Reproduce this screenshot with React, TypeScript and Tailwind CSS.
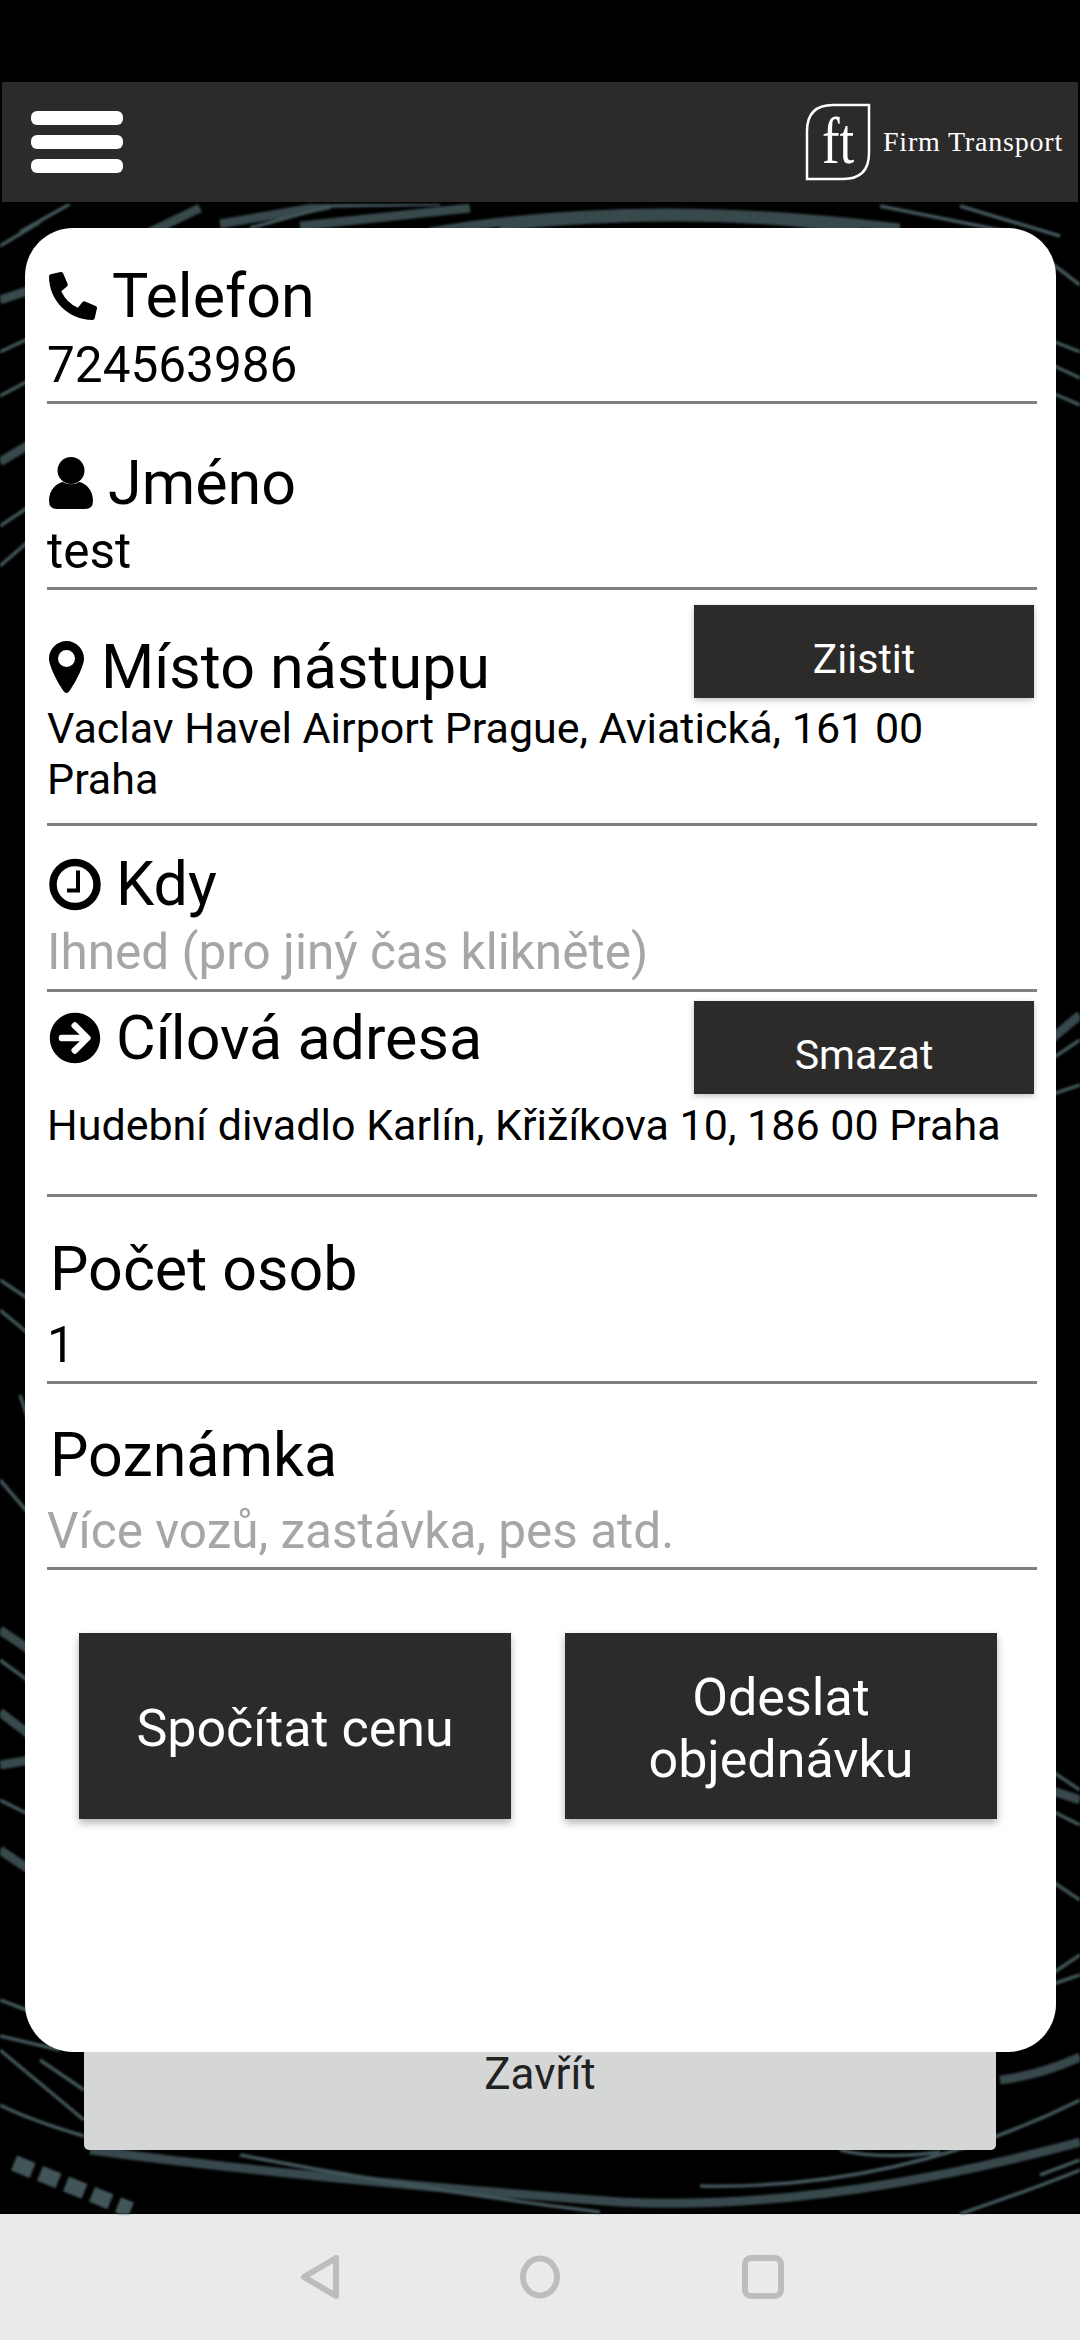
import { FaArrowCircleRight, FaPhoneAlt } from "react-icons/fa"

const wideStreaks = [
  "M150 232 L200 208", "M220 224 L330 205", "M300 226 L470 208", "M430 232 Q640 196 900 228", "M500 226 Q700 206 860 230",
  "M0 300 L30 290", "M0 462 L30 444", "M1050 1040 L1080 1015", "M1050 1790 L1080 1800", "M90 2150 Q300 2178 620 2202 Q820 2212 1080 2142",
  "M1000 2080 Q1040 2075 1080 2057", "M0 1712 L30 1735", "M0 1850 L30 1870", "M0 1630 L30 1650", "M0 1765 L30 1760",
]

const thinStreaks = [
  "M20 232 L70 204", "M0 246 L40 222", "M250 228 L330 206 L440 204", "M880 206 L1010 232", "M960 206 L1060 236",
  "M0 352 L30 338", "M0 396 L30 380", "M0 526 L30 506", "M0 566 L30 540",
  "M0 1280 L30 1300", "M0 1310 L30 1335", "M20 1395 L30 1425", "M0 1480 L30 1515", "M0 1660 L30 1682",
  "M0 1800 L30 1815", "M0 2000 L40 2015", "M0 2036 L60 2050",
  "M1050 262 L1080 285", "M1050 340 L1080 352", "M1050 364 L1080 378", "M1050 392 L1080 405",
  "M1050 1060 L1080 1040", "M1050 1095 L1080 1085", "M1050 1770 L1080 1790",
  "M1050 1810 L1080 1825", "M1050 1880 L1080 1900", "M1050 1975 L1080 1955", "M1050 1985 L1080 1975", "M1040 2175 L1080 2160",
  "M0 2105 Q30 2120 84 2136", "M240 2155 Q420 2190 600 2212", "M700 2186 Q900 2190 1080 2100", "M840 2150 Q880 2160 940 2152",
  "M40 2060 L84 2090", "M0 2050 L84 2120", "M960 2214 Q1030 2190 1080 2170",
]

function Background() {
  return (
    <svg className="absolute inset-0 h-full w-full blur-[1px]" viewBox="0 204 1080 2010" preserveAspectRatio="none">
      <g fill="none" stroke="#42565a">
        <g strokeWidth="9" opacity="0.85">
          {wideStreaks.map((d) => (
            <path key={d} d={d} />
          ))}
        </g>
        <g strokeWidth="3.5">
          {thinStreaks.map((d) => (
            <path key={d} d={d} />
          ))}
        </g>
        <path d="M14 2163 L131 2210" strokeWidth="16" strokeDasharray="20 8" />
      </g>
    </svg>
  )
}

function Logo() {
  return (
    <svg width="66" height="78" viewBox="0 0 66 78" className="shrink-0">
      <path d="M2 76 V28 Q2 2 28 2 H64 V50 Q64 76 38 76 Z" fill="none" stroke="#fff" strokeWidth="2.5" />
      <text transform="translate(33 60) scale(0.8 1)" textAnchor="middle" fill="#fff" fontFamily="'Liberation Serif', serif" fontSize="66">
        ft
      </text>
    </svg>
  )
}

function UserIcon() {
  return (
    <svg width="44" height="52" viewBox="0 0 44 52" className="ml-[2px] shrink-0">
      <circle cx="22" cy="13.5" r="13.5" />
      <path d="M0 44 C0 32 8 26 14 25 C18 28 26 28 30 25 C36 26 44 32 44 44 Q44 52 36 52 H8 Q0 52 0 44 Z" />
    </svg>
  )
}

function MarkerIcon() {
  return (
    <svg width="35" height="53" viewBox="0 0 35 53" className="ml-[2px] shrink-0">
      <path
        fillRule="evenodd"
        d="M17.5 0 C27 0 35 8 35 17.5 C35 26 24 46 19.5 51 Q17.5 53 15.5 51 C11 46 0 26 0 17.5 C0 8 8 0 17.5 0 Z M17.5 9 a8.5 8.5 0 1 0 0 17 a8.5 8.5 0 1 0 0 -17 Z"
      />
    </svg>
  )
}

function ClockIcon() {
  return (
    <svg width="52" height="53" viewBox="0 0 52 53" className="ml-[2px] shrink-0">
      <circle cx="26" cy="26.5" r="22" fill="none" stroke="#000" strokeWidth="7.5" />
      <path d="M29 12.5 V32.5 H18" fill="none" stroke="#000" strokeWidth="4" />
    </svg>
  )
}

function Label({ icon, gap, children }: { icon?: React.ReactNode; gap?: string; children: React.ReactNode }) {
  return (
    <div className={`flex h-[70px] items-center text-[61px] leading-[70px] text-black ${gap ?? ""}`}>
      {icon}
      <span className="whitespace-nowrap">{children}</span>
    </div>
  )
}

function ActionButton({ children }: { children: React.ReactNode }) {
  return (
    <div className="mr-[3px] flex h-[93px] w-[340px] items-end justify-center bg-[#2d2b2a] pb-[13px] text-[41px] leading-[52px] text-white shadow-[0_2px_6px_rgba(0,0,0,0.25)]">
      {children}
    </div>
  )
}

function BigButton({ children }: { children: React.ReactNode }) {
  return (
    <div className="flex h-[186px] w-[432px] items-center justify-center bg-[#2d2b2a] pt-[6px] text-center text-[52px] leading-[62px] text-white shadow-[0_4px_8px_rgba(0,0,0,0.3)]">
      {children}
    </div>
  )
}

export default function App() {
  return (
    <div className="flex h-[2340px] w-[1080px] flex-col overflow-hidden bg-black font-['Roboto',sans-serif]">
      <div className="h-[82px]" />
      <header className="mx-[2px] flex h-[120px] items-center justify-between bg-[#2d2b2a] pl-[29px] pr-[15px]">
        <div className="flex flex-col gap-[10px]">
          <div className="h-[14px] w-[92px] rounded-[6px] bg-white" />
          <div className="h-[14px] w-[92px] rounded-[6px] bg-white" />
          <div className="h-[14px] w-[92px] rounded-[6px] bg-white" />
        </div>
        <div className="flex items-center gap-[12px]">
          <Logo />
          <span className="font-['Liberation_Serif',serif] text-[28px] tracking-[0.8px] text-white">Firm Transport</span>
        </div>
      </header>

      <main className="relative mt-[2px] h-[2010px] shrink-0 bg-black">
        <Background />
        <div className="relative z-10 ml-[25px] mt-[24px] h-[1824px] w-[1031px] rounded-[48px] bg-white pl-[22px] pr-[19px]">
          <div className="h-[176px] border-b-[3px] border-[#808080] pt-[33px]">
            <Label gap="gap-[15px]" icon={<FaPhoneAlt className="ml-[2px] h-[48px] w-[48px] shrink-0 text-black" />}>
              Telefon
            </Label>
            <div className="mt-[6px] text-[49.5px] leading-[56px] text-black">724563986</div>
          </div>

          <div className="h-[186px] border-b-[3px] border-[#808080] pt-[44px]">
            <Label gap="gap-[15px]" icon={<UserIcon />}>
              Jméno
            </Label>
            <div className="mt-[5px] text-[49.5px] leading-[56px] text-black">test</div>
          </div>

          <div className="h-[236px] border-b-[3px] border-[#808080]">
            <div className="flex h-[113px] items-start justify-between">
              <div className="mt-[42px]">
                <Label gap="gap-[17px]" icon={<MarkerIcon />}>
                  Místo nástupu
                </Label>
              </div>
              <div className="mt-[15px]">
                <ActionButton>Ziistit</ActionButton>
              </div>
            </div>
            <div className="text-[43px] leading-[51px] text-black">
              Vaclav Havel Airport Prague, Aviatická, 161 00
              <br />
              Praha
            </div>
          </div>

          <div className="h-[166px] border-b-[3px] border-[#808080] pt-[23px]">
            <Label gap="gap-[15px]" icon={<ClockIcon />}>
              Kdy
            </Label>
            <div className="mt-[5px] text-[49.5px] leading-[56px] text-[#a6a6a6]">Ihned (pro jiný čas klikněte)</div>
          </div>

          <div className="h-[205px] border-b-[3px] border-[#808080]">
            <div className="flex h-[108px] items-start justify-between">
              <div className="mt-[11px]">
                <Label gap="gap-[15px]" icon={<FaArrowCircleRight className="ml-[2px] h-[52px] w-[52px] shrink-0 text-black" />}>
                  Cílová adresa
                </Label>
              </div>
              <div className="mt-[9px]">
                <ActionButton>Smazat</ActionButton>
              </div>
            </div>
            <div className="text-[43px] leading-[51px] text-black">Hudební divadlo Karlín, Křižíkova 10, 186 00 Praha</div>
          </div>

          <div className="h-[187px] border-b-[3px] border-[#808080] pt-[37px]">
            <div className="pl-[3px]">
              <Label>Počet osob</Label>
            </div>
            <div className="mt-[13px] text-[49.5px] leading-[56px] text-black">1</div>
          </div>

          <div className="h-[186px] border-b-[3px] border-[#808080] pt-[36px]">
            <div className="pl-[3px]">
              <Label>Poznámka</Label>
            </div>
            <div className="mt-[13px] text-[49.5px] leading-[56px] text-[#a6a6a6]">Více vozů, zastávka, pes atd.</div>
          </div>

          <div className="mt-[63px] flex gap-[54px] pl-[32px]">
            <BigButton>Spočítat cenu</BigButton>
            <BigButton>
              Odeslat
              <br />
              objednávku
            </BigButton>
          </div>
        </div>

        <div className="relative mx-[84px] -mt-[52px] flex h-[150px] w-[912px] items-center justify-center rounded-[5px] bg-[#d5d7d6] pb-[3px] text-[44px] text-[#222]">
          Zavřít
        </div>
      </main>

      <nav className="flex h-[126px] items-center justify-center gap-[180px] bg-[#eaeaea]">
        <svg width="44" height="44" viewBox="0 0 44 44">
          <path d="M40 3 V41 L8 22 Z" fill="none" stroke="#bdbdbd" strokeWidth="6" strokeLinejoin="round" />
        </svg>
        <svg width="42" height="44" viewBox="0 0 42 44">
          <ellipse cx="20" cy="22" rx="17" ry="18.5" fill="none" stroke="#bdbdbd" strokeWidth="6" />
        </svg>
        <svg width="42" height="44" viewBox="0 0 42 44">
          <rect x="3" y="3" width="36" height="38" rx="6" fill="none" stroke="#bdbdbd" strokeWidth="6" />
        </svg>
      </nav>
    </div>
  )
}
